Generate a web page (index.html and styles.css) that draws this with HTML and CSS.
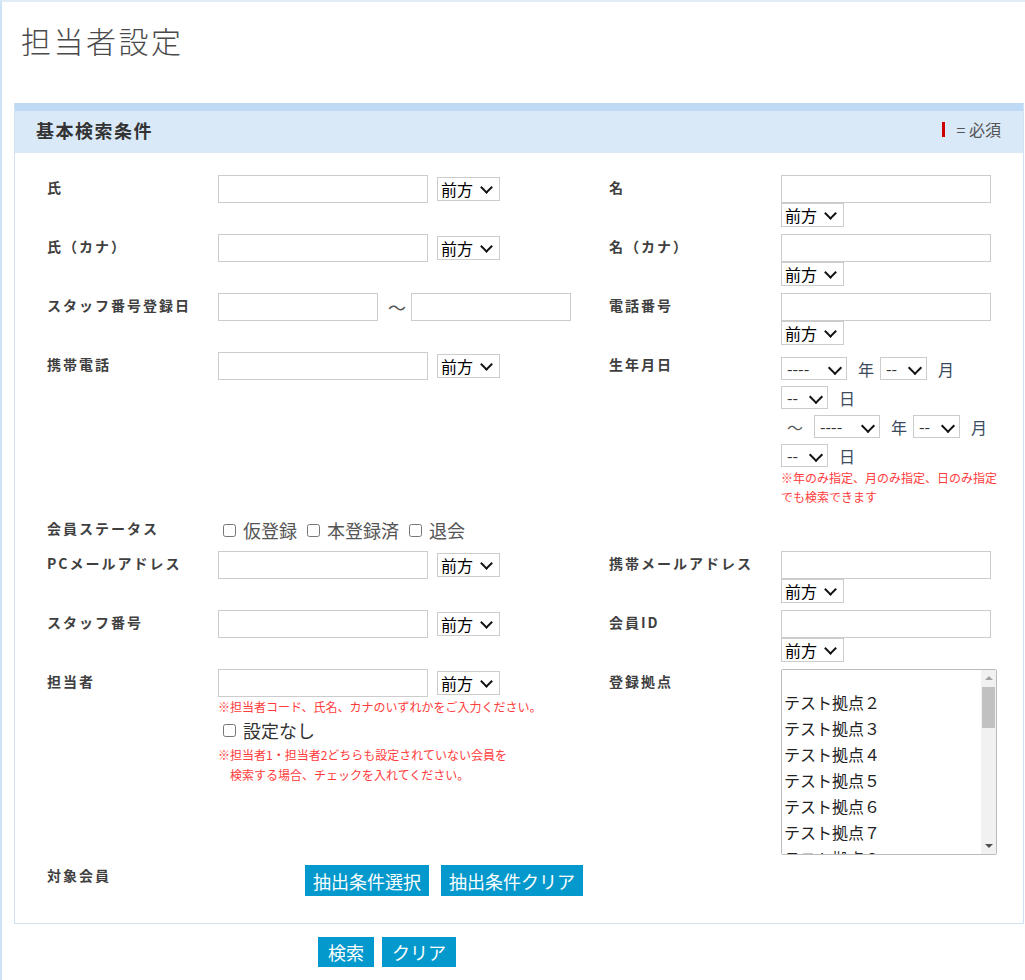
FILE: index.html
```html
<!DOCTYPE html>
<html lang="ja">

<head>
    <meta charset="UTF-8">
    <meta name="viewport" content="width=device-width, initial-scale=1.0">
    <title>担当者設定</title>
    <link rel="stylesheet" href="styles.css">
</head>

<body>
<div class="page">
    <h1 class="page-title">担当者設定</h1>

    <div class="panel">
        <div class="panel-head">
            <h2>基本検索条件</h2>
            <span class="legend"><i class="req-mark"></i>= 必須</span>
        </div>

        <div class="search-grid">
            <!-- 氏 / 名 -->
            <div class="label">氏</div>
            <div class="field">
                <input type="text" class="text">
                <span class="sel"><select class="match"><option>前方</option><option>部分</option><option>完全</option></select></span>
            </div>
            <div class="label">名</div>
            <div class="field">
                <input type="text" class="text">
                <span class="sel"><select class="match"><option>前方</option><option>部分</option><option>完全</option></select></span>
            </div>

            <div class="label">氏（カナ）</div>
            <div class="field">
                <input type="text" class="text">
                <span class="sel"><select class="match"><option>前方</option><option>部分</option><option>完全</option></select></span>
            </div>
            <div class="label">名（カナ）</div>
            <div class="field">
                <input type="text" class="text">
                <span class="sel"><select class="match"><option>前方</option><option>部分</option><option>完全</option></select></span>
            </div>

            <div class="label">スタッフ番号登録日</div>
            <div class="field">
                <input type="text" class="text short">
                <span class="tilde">〜</span>
                <input type="text" class="text short">
            </div>
            <div class="label">電話番号</div>
            <div class="field">
                <input type="text" class="text">
                <span class="sel"><select class="match"><option>前方</option><option>部分</option><option>完全</option></select></span>
            </div>

            <div class="label">携帯電話</div>
            <div class="field">
                <input type="text" class="text">
                <span class="sel"><select class="match"><option>前方</option><option>部分</option><option>完全</option></select></span>
            </div>
            <div class="label">生年月日</div>
            <div class="date-range">
                <div class="date-line">
                    <span class="sel sel-date"><select class="year"><option>----</option><option>1980</option><option>1990</option></select></span>
                    <span class="unit">年</span>
                    <span class="sel sel-date"><select class="md"><option>--</option><option>1</option><option>12</option></select></span>
                    <span class="unit">月</span>
                </div>
                <div class="date-line">
                    <span class="sel sel-date"><select class="md"><option>--</option><option>1</option><option>31</option></select></span>
                    <span class="unit">日</span>
                </div>
                <div class="date-line">
                    <span class="date-tilde">〜</span>
                    <span class="sel sel-date"><select class="year"><option>----</option><option>1980</option><option>1990</option></select></span>
                    <span class="unit">年</span>
                    <span class="sel sel-date"><select class="md"><option>--</option><option>1</option><option>12</option></select></span>
                    <span class="unit">月</span>
                </div>
                <div class="date-line">
                    <span class="sel sel-date"><select class="md"><option>--</option><option>1</option><option>31</option></select></span>
                    <span class="unit">日</span>
                </div>
                <p class="note">※年のみ指定、月のみ指定、日のみ指定でも検索できます</p>
            </div>

            <!-- 会員ステータス -->
            <div class="label">会員ステータス</div>
            <div class="field wide checks">
                <label class="check"><input type="checkbox">仮登録</label>
                <label class="check"><input type="checkbox">本登録済</label>
                <label class="check"><input type="checkbox">退会</label>
            </div>

            <div class="label">PCメールアドレス</div>
            <div class="field">
                <input type="text" class="text">
                <span class="sel"><select class="match"><option>前方</option><option>部分</option><option>完全</option></select></span>
            </div>
            <div class="label">携帯メールアドレス</div>
            <div class="field">
                <input type="text" class="text">
                <span class="sel"><select class="match"><option>前方</option><option>部分</option><option>完全</option></select></span>
            </div>

            <div class="label">スタッフ番号</div>
            <div class="field">
                <input type="text" class="text">
                <span class="sel"><select class="match"><option>前方</option><option>部分</option><option>完全</option></select></span>
            </div>
            <div class="label">会員ID</div>
            <div class="field">
                <input type="text" class="text">
                <span class="sel"><select class="match"><option>前方</option><option>部分</option><option>完全</option></select></span>
            </div>

            <div class="label">担当者</div>
            <div class="field">
                <input type="text" class="text">
                <span class="sel"><select class="match"><option>前方</option><option>部分</option><option>完全</option></select></span>
                <p class="hint">※担当者コード、氏名、カナのいずれかをご入力ください。</p>
                <label class="check check-lg"><input type="checkbox">設定なし</label>
                <p class="hint hint-2">※担当者1・担当者2どちらも設定されていない会員を<br>　検索する場合、チェックを入れてください。</p>
            </div>
            <div class="label">登録拠点</div>
            <div class="field">
                <div class="list-box">
                    <select class="base-list" multiple>
                        <option></option>
                        <option>テスト拠点２</option>
                        <option>テスト拠点３</option>
                        <option>テスト拠点４</option>
                        <option>テスト拠点５</option>
                        <option>テスト拠点６</option>
                        <option>テスト拠点７</option>
                        <option>テスト拠点８</option>
                        <option>テスト拠点９</option>
                        <option>テスト拠点１０</option>
                        <option>テスト拠点１１</option>
                        <option>テスト拠点１２</option>
                        <option>テスト拠点１３</option>
                        <option>テスト拠点１４</option>
                        <option>テスト拠点１５</option>
                        <option>テスト拠点１６</option>
                        <option>テスト拠点１７</option>
                        <option>テスト拠点１８</option>
                        <option>テスト拠点１９</option>
                        <option>テスト拠点２０</option>
                        <option>テスト拠点２１</option>
                        <option>テスト拠点２２</option>
                        <option>テスト拠点２３</option>
                        <option>テスト拠点２４</option>
                        <option>テスト拠点２５</option>
                        <option>テスト拠点２６</option>
                    </select>
                    <div class="scrollbar" aria-hidden="true">
                        <span class="sb-up"></span>
                        <span class="sb-thumb"></span>
                        <span class="sb-down"></span>
                    </div>
                </div>
            </div>

            <div class="label target">対象会員</div>
            <div class="field wide target">
                <div class="extract-buttons">
                    <button class="btn">抽出条件選択</button>
                    <button class="btn">抽出条件クリア</button>
                </div>
            </div>
        </div>
    </div>

    <div class="actions">
        <button class="btn btn-main">検索</button>
        <button class="btn btn-main">クリア</button>
    </div>
</div>
</body>

</html>
```

FILE: styles.css
```css
* {
    box-sizing: border-box;
}

body {
    margin: 0;
    font-family: "Noto Sans CJK JP", "Liberation Sans", sans-serif;
    color: #333;
    background-color: #fff;
}

.page {
    min-height: 100vh;
    border-top: 2px solid #e2ecf6;
    border-left: 2px solid #cfe3f6;
    padding-left: 12px;
}

.page-title {
    margin: 0;
    height: 101px;
    padding: 15px 0 0 7px;
    font-size: 30px;
    line-height: 46px;
    font-weight: 300;
    letter-spacing: 2.5px;
    color: #4a4a4a;
}

/* search panel */
.panel {
    margin-right: 1px;
    border: 1px solid #cfe1f2;
    border-top: none;
}

.panel-head {
    display: flex;
    justify-content: space-between;
    height: 50px;
    padding: 0 22px 0 21px;
    border-top: 8px solid #bfdaf4;
    background-color: #dae9f8;
}

.panel-head h2 {
    margin: 0;
    font-size: 18px;
    line-height: 38px;
    font-weight: bold;
    letter-spacing: 1.5px;
    color: #333;
}

.legend {
    display: flex;
    font-size: 16px;
    line-height: 36px;
    color: #555;
}

.req-mark {
    width: 3px;
    height: 15px;
    margin: 11px 12px 0 0;
    background-color: #c00;
}

.search-grid {
    display: grid;
    grid-template-columns: 171px 391px 172px 1fr;
    padding: 22px 0 20px 32px;
}

.search-grid > div {
    padding-bottom: 7px;
}

.label {
    font-size: 14px;
    line-height: 24px;
    font-weight: bold;
    letter-spacing: 2px;
    color: #3f3f3f;
}

.field {
    display: flex;
    flex-wrap: wrap;
    align-items: center;
    align-content: flex-start;
    column-gap: 9px;
}

.wide {
    grid-column: 2 / span 3;
}

.text {
    width: 210px;
    height: 28px;
    padding: 0 4px;
    border: 1px solid #ccc;
    font-family: inherit;
    font-size: 16px;
}

.text.short {
    width: 160px;
}

.tilde {
    margin: 0 -4px 0 1px;
    font-size: 18px;
    color: #555;
}

/* selects with a drawn chevron */
.sel {
    position: relative;
    display: flex;
}

.sel::after {
    content: "";
    position: absolute;
    top: 50%;
    right: 9px;
    width: 7px;
    height: 7px;
    margin-top: -6px;
    border: solid #111;
    border-width: 0 2px 2px 0;
    transform: rotate(45deg);
    pointer-events: none;
}

.sel-date::after {
    right: 7px;
    width: 8px;
    height: 8px;
    margin-top: -6px;
}

select {
    appearance: none;
    font-family: inherit;
    color: #000;
    background-color: #fff;
    border: 1px solid #ccc;
    border-radius: 0;
}

.match {
    width: 63px;
    height: 24px;
    padding: 0 18px 0 3px;
    font-size: 16px;
    line-height: 22px;
}

/* 生年月日 */
.date-range {
    padding-top: 2px;
}

.date-line {
    display: flex;
    align-items: center;
    height: 29px;
}

.year,
.md {
    height: 23px;
    padding: 0 18px 0 5px;
    font-size: 16px;
    line-height: 21px;
    color: #333;
}

.year {
    width: 66px;
}

.md {
    width: 47px;
}

.unit {
    margin: 0 6px 0 11px;
    font-size: 16px;
    color: #3d4a5c;
}

.date-tilde {
    margin: 0 11px 0 6px;
    font-size: 16px;
    color: #555;
}

.note,
.hint {
    margin: 0;
    font-size: 12px;
    line-height: 19px;
    color: #ff3b3b;
}

.note {
    max-width: 220px;
    margin: -2px 0 3px;
}

.hint {
    flex-basis: 100%;
}

.hint-2 {
    margin-top: 1px;
    line-height: 20px;
}

.check {
    display: inline-flex;
    align-items: center;
    gap: 7px;
    height: 28px;
    font-size: 18px;
    color: #555;
}

.checks {
    column-gap: 5px;
}

.check input {
    margin: 0 0 0 5px;
    width: 13px;
    height: 13px;
}

.check-lg {
    color: #333;
}

/* 登録拠点 list, scrollbar drawn over its right edge */
.list-box {
    position: relative;
    width: 216px;
    height: 186px;
}

.base-list {
    width: 100%;
    height: 100%;
    padding: 0;
    border: 1px solid #bbb;
    border-radius: 2px;
    font-size: 16px;
    color: #222;
}

.base-list option {
    padding: 1px 2px 1px;
}

.scrollbar {
    position: absolute;
    top: 1px;
    right: 1px;
    bottom: 1px;
    width: 15px;
    display: flex;
    flex-direction: column;
    align-items: center;
    background-color: #f1f1f1;
    pointer-events: none;
}

.sb-up,
.sb-down {
    display: flex;
    align-items: center;
    justify-content: center;
    width: 15px;
    height: 16px;
}

.sb-up::before,
.sb-down::before {
    content: "";
    border: 4px solid transparent;
}

.sb-up::before {
    border-top-width: 0;
    border-bottom-color: #a3a3a3;
}

.sb-down {
    margin-top: auto;
}

.sb-down::before {
    border-bottom-width: 0;
    border-top-color: #505050;
}

.sb-thumb {
    width: 13px;
    height: 41px;
    margin-top: 1px;
    background-color: #c1c1c1;
}

.target {
    padding-top: 1px;
}

.extract-buttons {
    display: flex;
    gap: 12px;
    margin: 2px 0 0 87px;
}

.btn {
    height: 31px;
    padding: 0 8px;
    border: none;
    background-color: #0399cc;
    color: #fff;
    font-family: inherit;
    font-size: 18px;
    cursor: pointer;
}

.btn:hover {
    background-color: #0282ad;
}

.actions {
    display: flex;
    gap: 8px;
    margin: 13px 0 0 304px;
}

.btn-main {
    height: 30px;
    padding: 0 10px;
}
```
